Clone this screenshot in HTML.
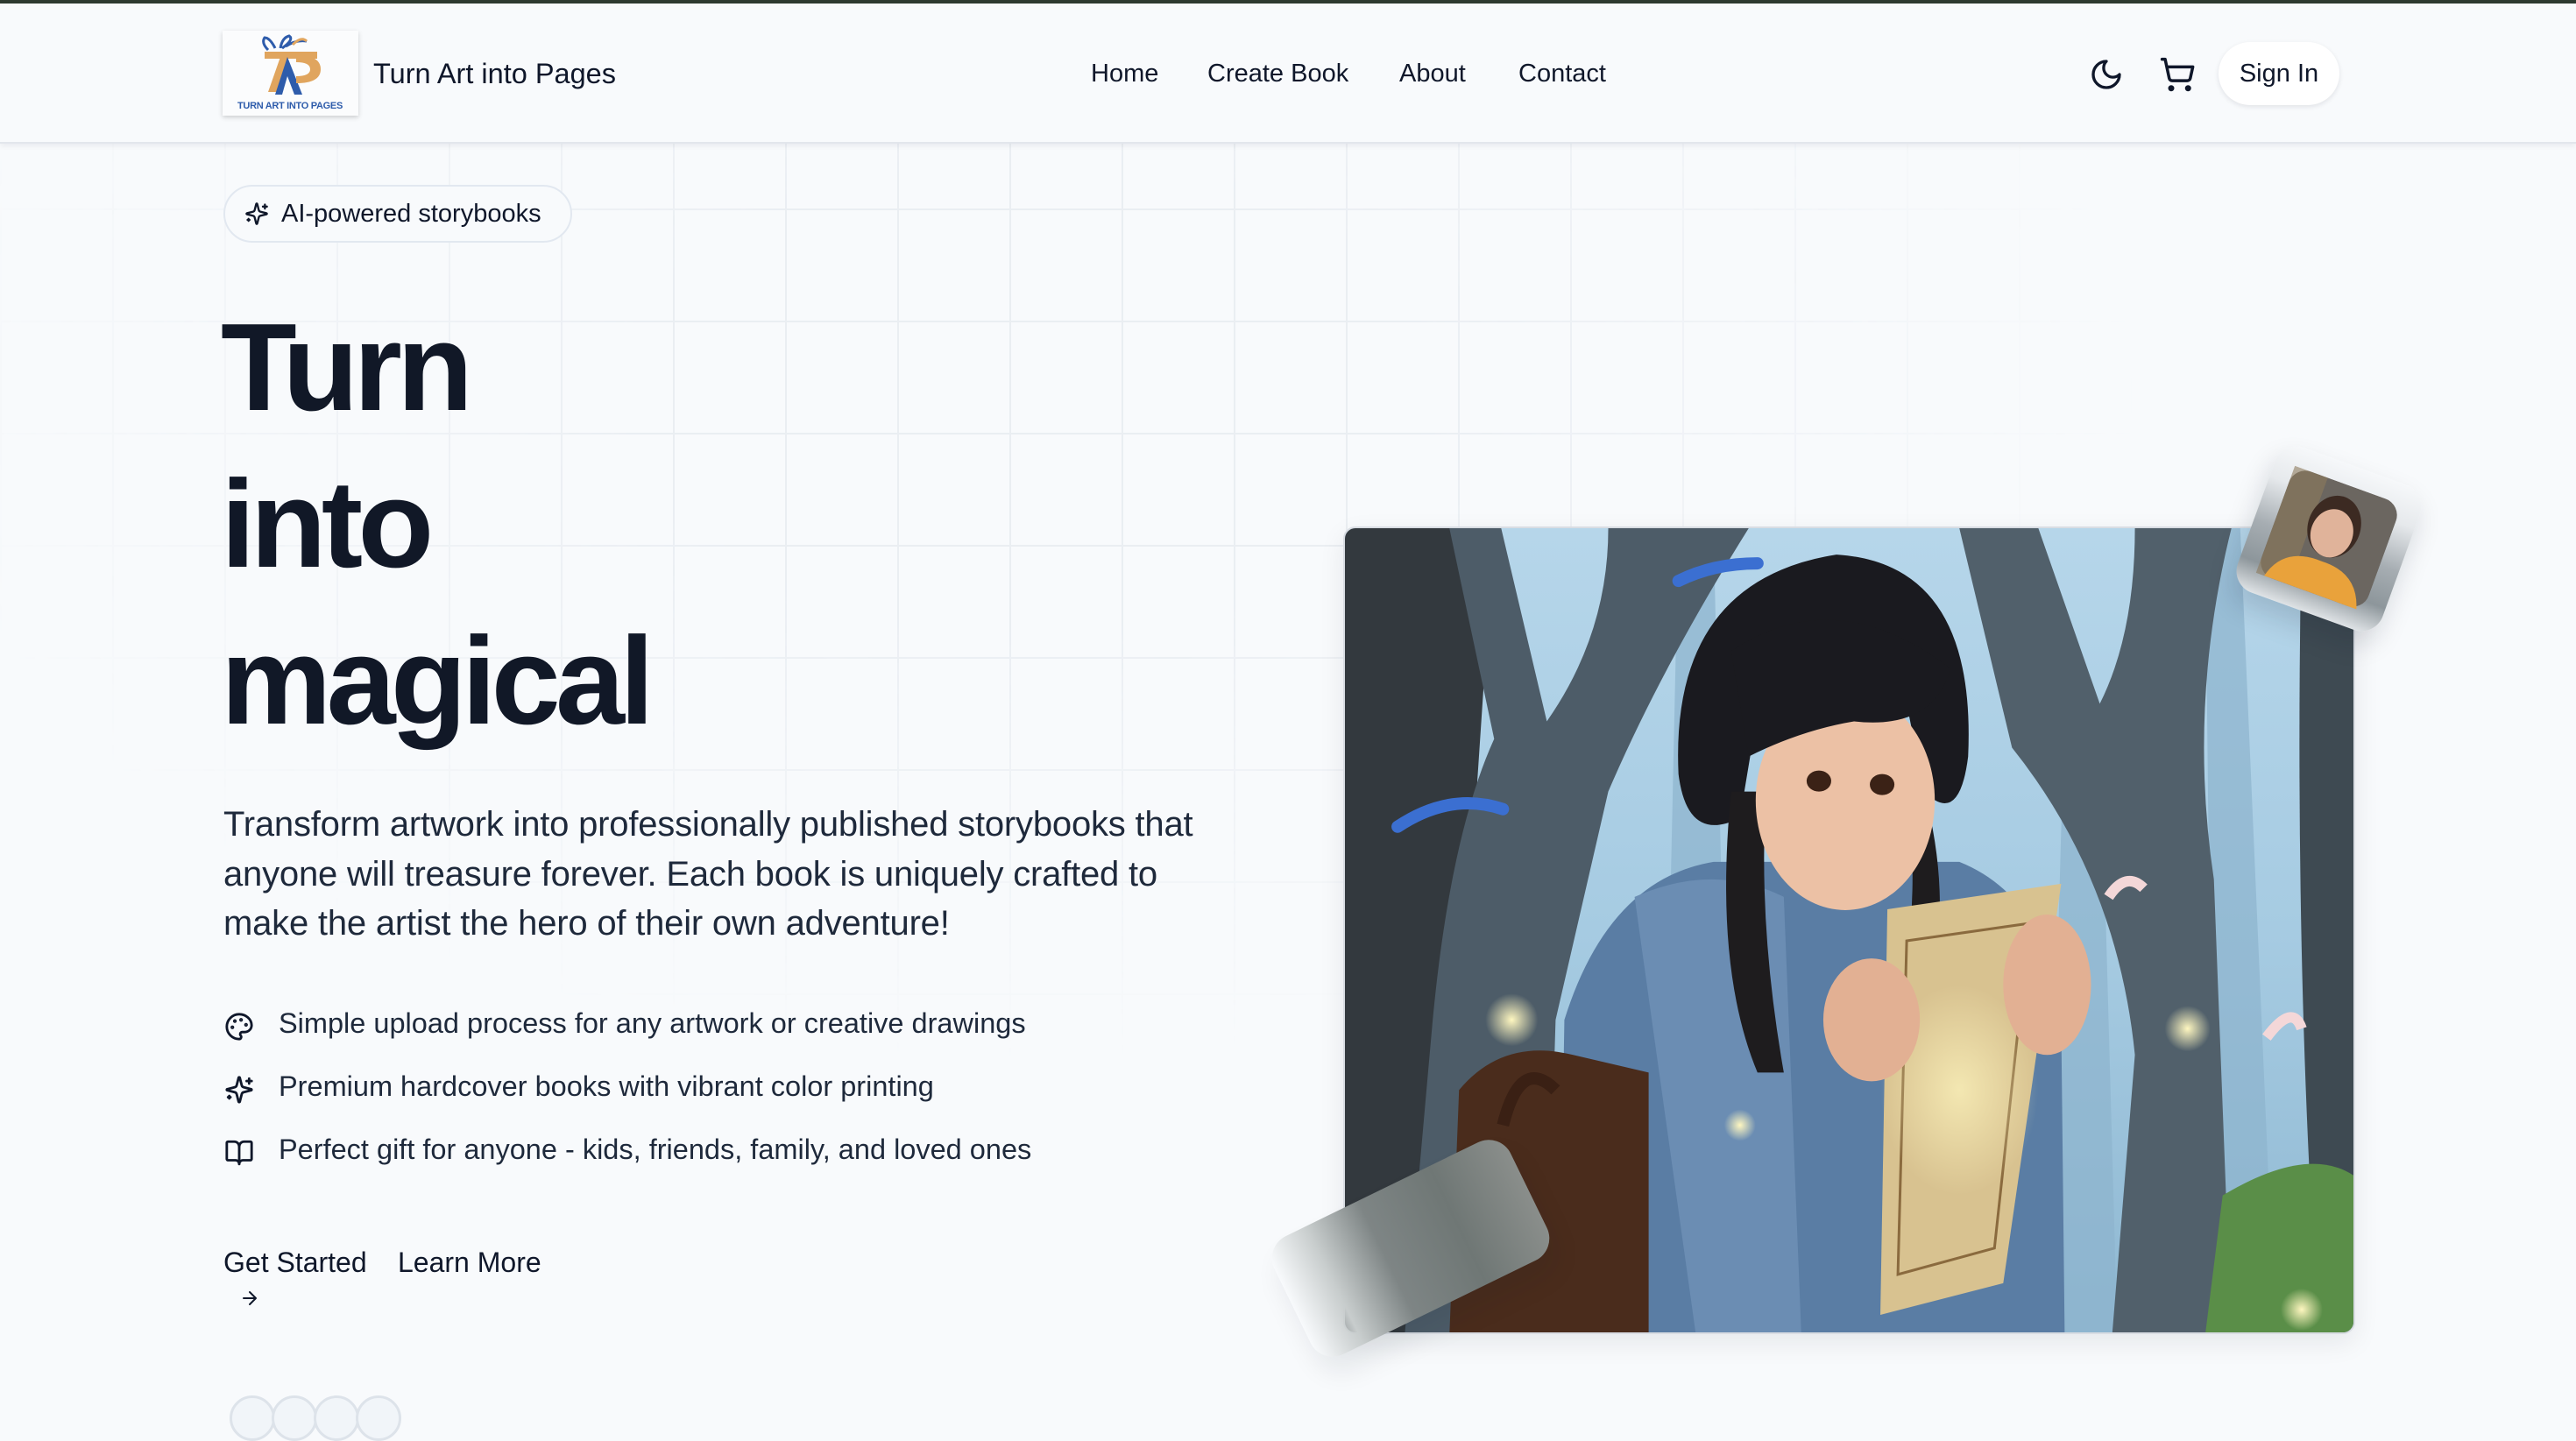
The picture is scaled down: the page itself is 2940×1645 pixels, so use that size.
<!DOCTYPE html>
<html><head><meta charset="utf-8"><style>
*{margin:0;padding:0;box-sizing:border-box}
html,body{width:2940px;height:1600px;overflow:hidden;background:#f8fafc;font-family:"Liberation Sans",Arial,sans-serif;color:#0f172a}
.topbar{position:absolute;left:0;top:0;width:2940px;height:4px;background:#2e3a30}
.grid{position:absolute;left:0;top:164px;width:2940px;height:1436px;
background-image:linear-gradient(to right,#e9edf2 2px,transparent 2px),linear-gradient(to bottom,#e9edf2 2px,transparent 2px);
background-size:128px 128px;background-position:0 -54px;
-webkit-mask-image:radial-gradient(ellipse 1500px 900px at 40% 20%,#000 30%,transparent 85%);mask-image:radial-gradient(ellipse 1500px 900px at 40% 20%,#000 30%,transparent 85%);opacity:.9}
header{position:absolute;left:0;top:4px;width:2940px;height:160px;background:#f8fafc;border-bottom:2px solid #e2e6ec;box-shadow:0 3px 6px rgba(15,23,42,.06)}
.logo{position:absolute;left:254px;top:31px;width:155px;height:97px;background:#fbfcfd;box-shadow:0 2px 5px rgba(0,0,0,.18)}
.brand{position:absolute;left:426px;top:62px;font-size:32.5px;font-weight:500;color:#0f172a}
nav a{position:absolute;top:64px;font-size:29px;font-weight:500;color:#0f172a;text-decoration:none}
.signin{position:absolute;left:2532px;top:44px;width:138px;height:72px;border-radius:36px;background:#fff;box-shadow:0 2px 6px rgba(15,23,42,.1);font-size:29px;font-weight:500;text-align:center;line-height:72px}
.badge{position:absolute;left:255px;top:211px;width:398px;height:66px;border:2px solid #e2e8f0;border-radius:33px;background:#f8fafc;font-size:29px;font-weight:500;line-height:62px;padding-left:64px}
h1{position:absolute;left:252px;top:330px;font-size:142px;font-weight:700;letter-spacing:-.04em;line-height:179px;color:#111827}
.lead{position:absolute;left:255px;top:913px;width:1120px;font-size:40px;line-height:56.5px;color:#1e293b;letter-spacing:-.005em}
.feat{position:absolute;left:318px;font-size:32.5px;color:#1e293b}
.ficon{position:absolute;left:256px}
.btn{position:absolute;top:1423px;font-size:32px;color:#0f172a}
.av{position:absolute;top:1593px;width:52px;height:52px;border-radius:50%;border:3px solid #dde3ea;background:#f1f5f9}
.img{position:absolute;left:1533px;top:601px;width:1155px;height:922px;border-radius:14px;border:2px solid #d9dde3;overflow:hidden;box-shadow:0 10px 30px rgba(15,23,42,.08)}
.photo{position:absolute;left:2570px;top:527px;width:176px;height:176px;border-radius:26px;transform:rotate(20deg);background:linear-gradient(180deg,#f6f8fa 0%,#e6e9ec 25%,#a6adb2 55%,#8d969b 80%,#dfe3e6 100%);box-shadow:0 16px 30px rgba(15,23,42,.15);overflow:hidden}
.glass{position:absolute;left:1460px;top:1350px;width:300px;height:150px;border-radius:28px;transform:rotate(-26deg);background:linear-gradient(90deg,rgba(248,250,252,0) 0%,#c8cdcd 18%,#7e8585 40%,#6f7775 70%,#8a8e8b 100%);box-shadow:0 20px 30px rgba(15,23,42,.08)}
</style></head><body>
<div class="grid"></div>
<div class="topbar"></div>
<header>
<div class="logo"><svg width="155" height="97" viewBox="0 0 155 97">
<path d="M52 22 q-8 -8 -4 -14 q6 0 12 12 M66 20 q2 -12 10 -14 q6 4 -8 14 M72 18 q12 -8 24 -6" fill="none" stroke="#2e5cab" stroke-width="3"/>
<path d="M80 16 q10 -10 16 -4" fill="none" stroke="#e0a55e" stroke-width="3"/>
<rect x="48" y="24" width="60" height="8" fill="#e0a55e"/>
<path d="M66 30 L52 70 L62 70 L74 32 Z" fill="#e0a55e"/>
<path d="M74 30 L60 73 L68 73 L74 52 L82 73 L91 73 Z" fill="#2e5cab"/>
<path d="M84 28 q28 0 28 16 q0 16 -28 16 l0 -8 q16 0 16 -8 q0 -8 -16 -8 z" fill="#e0a55e"/>
<text x="77" y="89" text-anchor="middle" font-family="Liberation Sans" font-size="11" font-weight="700" fill="#2e5cab" letter-spacing="-.3">TURN ART INTO PAGES</text>
</svg></div>
<div class="brand">Turn Art into Pages</div>
<nav><a style="left:1245px">Home</a><a style="left:1378px">Create Book</a><a style="left:1597px">About</a><a style="left:1733px">Contact</a></nav>
<svg style="position:absolute;left:2384px;top:61px" width="40" height="40" viewBox="0 0 24 24" fill="none" stroke="#0f172a" stroke-width="2" stroke-linecap="round" stroke-linejoin="round"><path d="M12 3a6 6 0 0 0 9 9 9 9 0 1 1-9-9Z"/></svg>
<svg style="position:absolute;left:2464px;top:60px" width="42" height="42" viewBox="0 0 24 24" fill="none" stroke="#0f172a" stroke-width="2" stroke-linecap="round" stroke-linejoin="round"><circle cx="8" cy="21" r="1"/><circle cx="19" cy="21" r="1"/><path d="M2.05 2.05h2l2.66 12.42a2 2 0 0 0 2 1.58h9.78a2 2 0 0 0 1.95-1.57l1.65-7.43H5.12"/></svg>
<div class="signin">Sign In</div>
</header>

<div class="badge"><svg style="position:absolute;left:22px;top:17px" width="28" height="28" viewBox="0 0 24 24" fill="none" stroke="#0f172a" stroke-width="2" stroke-linecap="round" stroke-linejoin="round"><path d="M9.94 15.5A2 2 0 0 0 8.5 14.06l-6.13-1.58a.5.5 0 0 1 0-.96L8.5 9.94A2 2 0 0 0 9.94 8.5l1.58-6.13a.5.5 0 0 1 .96 0L14.06 8.5A2 2 0 0 0 15.5 9.94l6.13 1.58a.5.5 0 0 1 0 .96L15.5 14.06a2 2 0 0 0-1.44 1.44l-1.58 6.13a.5.5 0 0 1-.96 0z"/><path d="M20 3v4M22 5h-4M4 17v2M5 18H3"/></svg>AI-powered storybooks</div>

<h1>Turn<br>into<br>magical</h1>
<p class="lead">Transform artwork into professionally published storybooks that anyone will treasure forever. Each book is uniquely crafted to make the artist the hero of their own adventure!</p>

<svg class="ficon" style="top:1155px" width="34" height="34" viewBox="0 0 24 24" fill="none" stroke="#0f172a" stroke-width="2" stroke-linecap="round" stroke-linejoin="round"><circle cx="13.5" cy="6.5" r=".5" fill="#0f172a"/><circle cx="17.5" cy="10.5" r=".5" fill="#0f172a"/><circle cx="8.5" cy="7.5" r=".5" fill="#0f172a"/><circle cx="6.5" cy="12.5" r=".5" fill="#0f172a"/><path d="M12 2C6.5 2 2 6.5 2 12s4.5 10 10 10c.93 0 1.65-.75 1.65-1.69 0-.44-.18-.84-.44-1.13-.29-.29-.44-.65-.44-1.13a1.64 1.64 0 0 1 1.67-1.67h2c3.05 0 5.56-2.5 5.56-5.55C21.97 6.01 17.46 2 12 2z"/></svg>
<div class="feat" style="top:1150px">Simple upload process for any artwork or creative drawings</div>
<svg class="ficon" style="top:1227px" width="34" height="34" viewBox="0 0 24 24" fill="none" stroke="#0f172a" stroke-width="2" stroke-linecap="round" stroke-linejoin="round"><path d="M9.94 15.5A2 2 0 0 0 8.5 14.06l-6.13-1.58a.5.5 0 0 1 0-.96L8.5 9.94A2 2 0 0 0 9.94 8.5l1.58-6.13a.5.5 0 0 1 .96 0L14.06 8.5A2 2 0 0 0 15.5 9.94l6.13 1.58a.5.5 0 0 1 0 .96L15.5 14.06a2 2 0 0 0-1.44 1.44l-1.58 6.13a.5.5 0 0 1-.96 0z"/><path d="M20 3v4M22 5h-4M4 17v2M5 18H3"/></svg>
<div class="feat" style="top:1222px">Premium hardcover books with vibrant color printing</div>
<svg class="ficon" style="top:1299px" width="34" height="34" viewBox="0 0 24 24" fill="none" stroke="#0f172a" stroke-width="2" stroke-linecap="round" stroke-linejoin="round"><path d="M12 7v14"/><path d="M3 18a1 1 0 0 1-1-1V4a1 1 0 0 1 1-1h5a4 4 0 0 1 4 4 4 4 0 0 1 4-4h5a1 1 0 0 1 1 1v13a1 1 0 0 1-1 1h-6a3 3 0 0 0-3 3 3 3 0 0 0-3-3z"/></svg>
<div class="feat" style="top:1294px">Perfect gift for anyone - kids, friends, family, and loved ones</div>

<div class="btn" style="left:255px">Get Started</div>
<svg style="position:absolute;left:273px;top:1470px" width="24" height="24" viewBox="0 0 24 24" fill="none" stroke="#0f172a" stroke-width="2" stroke-linecap="round" stroke-linejoin="round"><path d="M5 12h14M12 5l7 7-7 7"/></svg>
<div class="btn" style="left:454px">Learn More</div>
<div class="av" style="left:262px"></div><div class="av" style="left:310px"></div><div class="av" style="left:358px"></div><div class="av" style="left:406px"></div>

<div class="img"><svg width="1155" height="922" viewBox="0 0 1153 920" preserveAspectRatio="none">
<defs><linearGradient id="sky" x1="0" y1="0" x2="0" y2="1"><stop offset="0" stop-color="#b6d6ea"/><stop offset=".5" stop-color="#a6cbe2"/><stop offset="1" stop-color="#8fb8d2"/></linearGradient>
<radialGradient id="glow" cx=".5" cy=".5" r=".5"><stop offset="0" stop-color="#fff7c0"/><stop offset="1" stop-color="#fff7c0" stop-opacity="0"/></radialGradient></defs>
<rect width="1153" height="920" fill="url(#sky)"/>
<path d="M380 0 L420 0 L440 920 L360 920Z M980 0 L1020 0 L1060 920 L990 920Z M820 200 L860 200 L880 920 L800 920Z" fill="#8db3cd" opacity=".7"/>
<path d="M0 0 L170 0 L150 300 L160 920 L0 920Z" fill="#33393e"/>
<path d="M68 920 L100 560 Q120 350 170 240 L119 0 L178 0 L230 220 Q300 120 300 0 L460 0 Q360 160 300 300 L240 560 L229 920Z" fill="#4d5c68"/>
<path d="M874 920 L900 600 Q880 400 760 250 L700 0 L790 0 L860 200 Q900 120 900 0 L1010 0 Q960 200 990 400 L1010 920Z" fill="#51606b"/>
<path d="M1090 0 L1153 0 L1153 920 L1110 920 Q1080 500 1090 0Z" fill="#3e4a52"/>
<path d="M1000 760 Q1100 700 1153 740 L1153 920 L980 920Z" fill="#5a8e48"/>
<path d="M60 340 Q120 300 180 320 M380 60 Q420 40 470 40" fill="none" stroke="#3b6fd1" stroke-width="14" stroke-linecap="round"/>
<path d="M244 920 L250 560 Q300 400 420 380 L700 380 Q800 420 816 560 L820 920Z" fill="#5a7da4"/>
<path d="M330 420 Q420 380 500 420 L520 920 L400 920Z" fill="#6b8db3"/>
<path d="M380 280 Q370 60 560 30 Q720 40 710 260 Q700 340 660 300 L640 200 L470 210 L450 330 Q390 360 380 280Z" fill="#1a1a1f"/>
<path d="M440 300 Q420 500 470 620 L500 620 Q470 450 480 300Z M660 300 Q700 450 650 580 L620 570 Q660 450 640 300Z" fill="#1e1c1e"/>
<ellipse cx="570" cy="310" rx="102" ry="125" fill="#ecc1a5"/>
<path d="M440 140 Q560 60 690 160 Q670 230 580 220 Q520 230 460 260Z" fill="#1a1a1f"/>
<ellipse cx="540" cy="288" rx="14" ry="12" fill="#3b2216"/><ellipse cx="612" cy="292" rx="14" ry="12" fill="#3b2216"/>
<path d="M119 920 L130 640 Q180 580 260 600 L346 620 L346 920Z" fill="#4a2c1c"/>
<path d="M180 680 Q200 600 240 640" fill="none" stroke="#3a2014" stroke-width="14"/>
<path d="M618 434 L816 405 L750 860 L610 896Z" fill="#d8c290"/>
<path d="M640 470 L780 450 L740 820 L630 850Z" fill="none" stroke="#8a6a3e" stroke-width="3"/>
<ellipse cx="700" cy="640" rx="90" ry="120" fill="url(#glow)" opacity=".7"/>
<ellipse cx="600" cy="560" rx="55" ry="70" fill="#e2b093"/><ellipse cx="800" cy="520" rx="50" ry="80" fill="#e2b093"/>
<circle cx="190" cy="560" r="30" fill="url(#glow)"/><circle cx="960" cy="570" r="26" fill="url(#glow)"/><circle cx="1090" cy="890" r="24" fill="url(#glow)"/><circle cx="450" cy="680" r="18" fill="url(#glow)"/>
<path d="M870 420 q20 -30 40 -10 M1050 580 q30 -40 40 -10" stroke="#f4d7d8" stroke-width="12" fill="none"/>
</svg></div>

<div class="photo"><svg style="position:absolute;left:23px;top:23px" width="130" height="130" viewBox="0 0 130 130"><rect width="130" height="130" rx="20" fill="#6b6660"/><rect x="0" y="0" width="40" height="130" fill="#8c7a5c" opacity=".6"/><ellipse cx="66" cy="50" rx="30" ry="36" fill="#3c2a22"/><ellipse cx="66" cy="58" rx="24" ry="28" fill="#e0b39a"/><path d="M10 130 Q20 90 66 92 Q110 90 122 130Z" fill="#e9a23b"/></svg></div>
<div class="glass"></div>
</body></html>
